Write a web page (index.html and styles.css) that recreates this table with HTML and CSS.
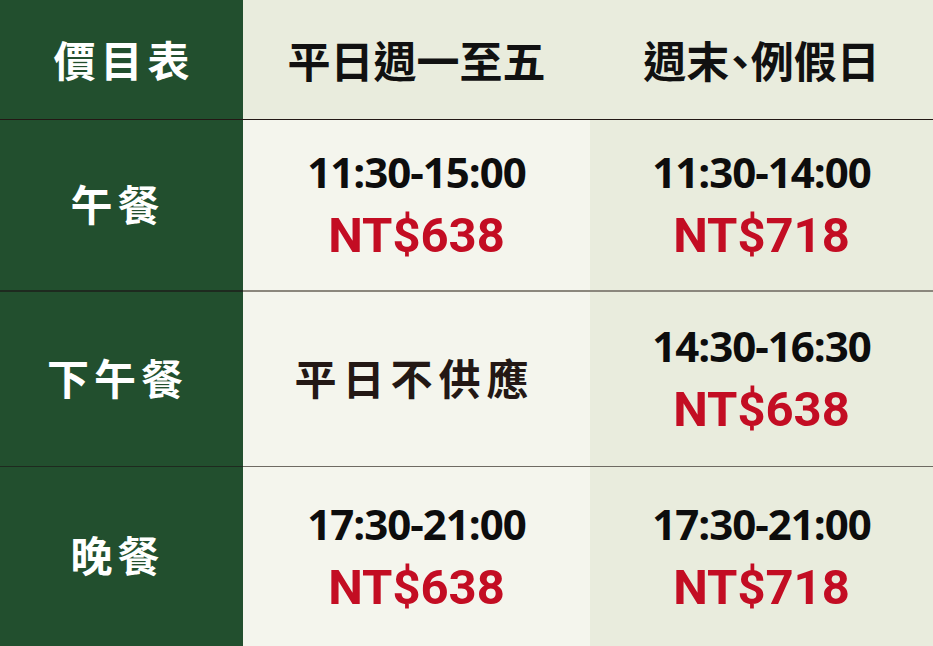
FILE: index.html
```html
<!DOCTYPE html>
<html lang="zh-Hant">
<head>
<meta charset="utf-8">
<title>價目表</title>
<link rel="stylesheet" href="styles.css">
</head>
<body>
<div class="table">
  <div class="cell label head-row">價目表</div>
  <div class="cell head head-row">平日週一至五</div>
  <div class="cell head head-row">週末、例假日</div>

  <div class="cell label row1">午餐</div>
  <div class="cell light row1"><div class="time">11:30-15:00</div><div class="price">NT$638</div></div>
  <div class="cell dark row1"><div class="time">11:30-14:00</div><div class="price">NT$718</div></div>

  <div class="cell label row2">下午餐</div>
  <div class="cell light row2"><div class="none">平日不供應</div></div>
  <div class="cell dark row2"><div class="time">14:30-16:30</div><div class="price">NT$638</div></div>

  <div class="cell label row3">晚餐</div>
  <div class="cell light row3"><div class="time">17:30-21:00</div><div class="price">NT$638</div></div>
  <div class="cell dark row3"><div class="time">17:30-21:00</div><div class="price">NT$718</div></div>
</div>
</body>
</html>
```
FILE: styles.css
```css
html, body {
  margin: 0;
  padding: 0;
  background: #e9ecdd;
}
.table {
  width: 933px;
  height: 646px;
  display: grid;
  grid-template-columns: 243px 347px 1fr;
  grid-template-rows: 120px 172px 175px 179px;
  font-family: "Noto Sans CJK TC", "Noto Sans", sans-serif;
}
.cell {
  display: flex;
  flex-direction: column;
  align-items: center;
  justify-content: center;
  box-sizing: border-box;
}
.head-row { border-bottom: 1px solid #231815; }
.row1 { border-bottom: 2px solid #8b877d; }
.row2 { border-bottom: 1px solid #6e6a62; }
.label.row1 { border-bottom-color: #1e2a1f; }
.label.row2 { border-bottom-color: #1e2a1f; }
.label {
  background: #224f2e;
  color: #ffffff;
  font-weight: 700;
  font-size: 42px;
  letter-spacing: 5px;
  text-indent: 5px;
  padding-bottom: 6px;
  padding-right: 13px;
}
.label.head-row {
  padding-bottom: 2px;
  padding-right: 0;
}
.head {
  background: #e9ecdd;
  color: #111111;
  font-weight: 700;
  font-size: 43px;
  font-feature-settings: "palt";
  padding-bottom: 1px;
}
.light { background: #f4f5ed; }
.dark { background: #e9ecdd; }
.time {
  font-family: "Open Sans", sans-serif;
  font-weight: 700;
  font-size: 42px;
  letter-spacing: -1px;
  color: #0d0d0d;
  line-height: 58px;
  margin-bottom: 4px;
}
.price {
  font-family: Roboto, sans-serif;
  font-weight: 700;
  font-size: 49px;
  color: #c30d23;
  line-height: 62px;
}
.none {
  color: #231815;
  font-weight: 700;
  font-size: 42px;
  letter-spacing: 6px;
  text-indent: 6px;
  padding-bottom: 6px;
  padding-right: 10px;
}
```
